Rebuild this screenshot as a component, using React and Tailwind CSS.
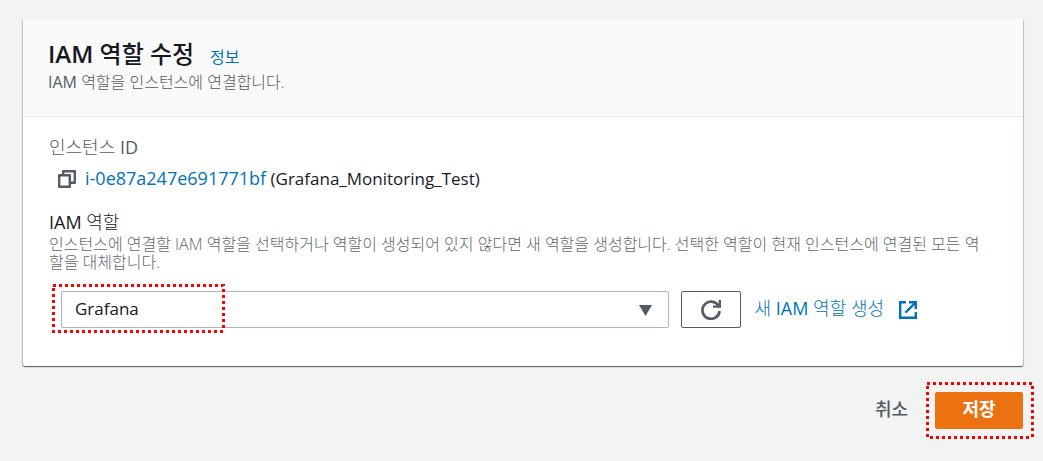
import React from "react";

function Highlight({ className }) {
  return (
    <svg className={`pointer-events-none absolute overflow-visible ${className}`} aria-hidden="true">
      <rect width="100%" height="100%" fill="none" stroke="#ff0000" strokeWidth="3" strokeDasharray="3 3" shapeRendering="crispEdges" />
    </svg>
  );
}

function CopyIcon() {
  return (
    <svg width="18" height="18" viewBox="0 0 18 18" fill="none" stroke="#545b64" strokeWidth="2.4" strokeLinejoin="round" aria-hidden="true">
      <path d="M1.2 5.2h10.6v11.6H1.2z" />
      <path d="M5.2 5V1.2h11.6v11.6H12" />
    </svg>
  );
}

function RefreshIcon() {
  return (
    <svg width="20" height="20" viewBox="0 0 20 20" fill="none" stroke="#545b64" aria-hidden="true">
      <path d="M18.6 11A8.6 8.6 0 1 1 15.6 3.6L18 6" strokeWidth="2.7" />
      <path d="M18.8 0v6.6H12" strokeWidth="2.4" />
    </svg>
  );
}

function ExternalIcon() {
  return (
    <svg width="18" height="18" viewBox="0 0 18 18" fill="none" stroke="#0073bb" strokeWidth="2.4" aria-hidden="true">
      <path d="M7 1.2H1.2v15.6h15.6V11" />
      <path d="M10 1.2h6.8V8M16.4 1.6L6.4 11.6" />
    </svg>
  );
}

export default function App() {
  return (
    <main className="min-h-screen bg-[#f2f3f3] pt-[19px] pr-5 pl-[23px] font-['Open_Sans','Noto_Sans_CJK_KR',sans-serif] text-[#16191f]">
      <section className="rounded-xs bg-white shadow-[0_1px_1px_0_rgba(0,28,36,0.5),1px_1px_1px_0_rgba(0,28,36,0.2),-1px_1px_1px_0_rgba(0,28,36,0.2)]">
        <header className="border-b border-[#eaeded] bg-[#fafafa] px-[25px] pt-[19px] pb-6">
          <div className="flex items-baseline gap-4">
            <h1 className="text-2xl leading-8 font-medium"><span className="font-semibold">IAM</span> 역할 수정</h1>
            <a href="#info" className="text-base leading-6 font-normal text-[#0073bb]">정보</a>
          </div>
          <p className="pt-0.5 text-base leading-5 font-light text-[#545b64]">
            <span className="font-normal">IAM</span> 역할을 인스턴스에 연결합니다.
          </p>
        </header>
        <div className="pt-[18px] pr-8 pb-[38px] pl-[26px]">
          <h2 className="text-lg leading-6 font-light text-[#545b64]">인스턴스 <span className="font-normal">ID</span></h2>
          <div className="flex items-center gap-[9px] pt-[7px] pl-[9px] text-[17px] leading-6">
            <button type="button" aria-label="인스턴스 ID 복사">
              <CopyIcon />
            </button>
            <p>
              <a href="#instance" className="text-lg leading-6 text-[#0073bb]">i-0e87a247e691771bf</a> (Grafana_Monitoring_Test)
            </p>
          </div>
          <label htmlFor="role" className="block pt-[19px] pb-px text-lg leading-6 font-light"><span className="font-normal">IAM</span> 역할</label>
          <p className="text-base leading-[18px] font-light text-[#5f6770]">
            인스턴스에 연결할 IAM 역할을 선택하거나 역할이 생성되어 있지 않다면 새 역할을 생성합니다. 선택한 역할이 현재 인스턴스에 연결된 모든 역할을 대체합니다.
          </p>
          <div className="flex items-center pt-5 pl-3">
            <div className="relative min-w-0 flex-1">
              <select id="role" defaultValue="Grafana" className="block h-[37px] w-full appearance-none rounded-xs border border-[#aab7b8] bg-white px-[13px] pb-0.5 text-[17px]">
                <option>Grafana</option>
              </select>
              <svg className="pointer-events-none absolute top-[14px] right-[17px]" width="13" height="11" viewBox="0 0 13 11" fill="#545b64" aria-hidden="true">
                <path d="M0 0h13L6.5 11z" />
              </svg>
              <Highlight className="-top-[6px] -left-[8px] h-[46px] w-[170px]" />
            </div>
            <button type="button" aria-label="새로 고침" className="ml-3 flex h-[37px] w-[60px] items-center justify-center rounded-xs border border-[#545b64]">
              <RefreshIcon />
            </button>
            <a href="#create-role" className="mr-[74px] ml-[14px] flex items-center gap-[15px] text-lg leading-6 text-[#0073bb]">
              <span className="pb-1 font-light">새 <span className="font-normal">IAM</span> 역할 생성</span>
              <ExternalIcon />
            </a>
          </div>
        </div>
      </section>
      <footer className="flex items-center justify-end gap-[27px] pt-[26px]">
        <button type="button" className="pb-1 text-lg leading-6 font-medium text-[#545b64]">취소</button>
        <div className="relative">
          <button type="button" className="block h-[37px] w-[88px] rounded-xs bg-[#ec7211] pb-1 text-lg leading-6 font-bold text-white">저장</button>
          <Highlight className="-top-[9px] -left-[8px] h-[54px] w-[105px]" />
        </div>
      </footer>
    </main>
  );
}
